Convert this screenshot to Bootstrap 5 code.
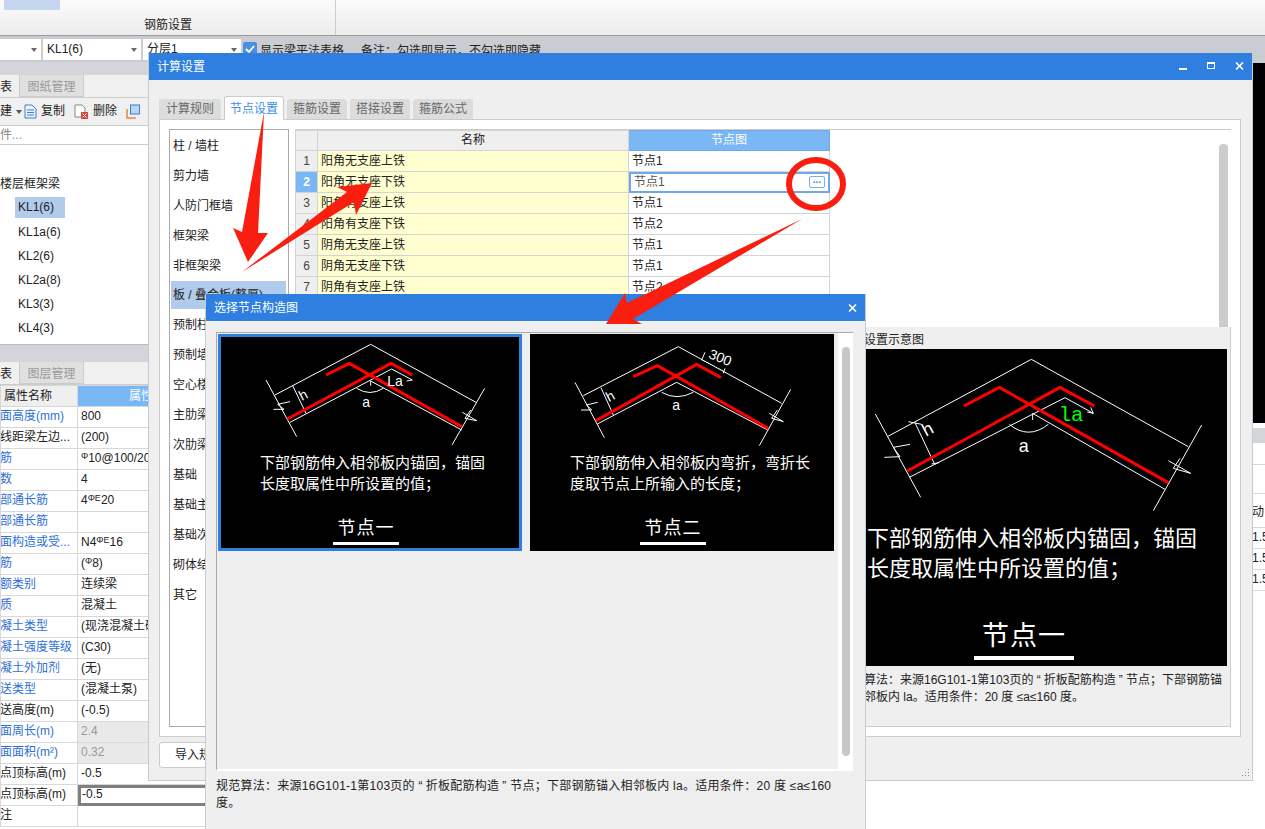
<!DOCTYPE html>
<html lang="zh-CN">
<head>
    <meta charset="UTF-8">
    <meta name="viewport" content="width=device-width, initial-scale=1.0">
    <title>计算设置</title>
    <link href="https://cdn.jsdelivr.net/npm/bootstrap@5.3.0/dist/css/bootstrap.min.css" rel="stylesheet">
    <style>
        body {
            width: 1265px;
            height: 829px;
            overflow: hidden;
            position: relative;
            background: #fff;
            color: #222;
            font: 12px/1.3 "Liberation Sans", "Noto Sans CJK SC", sans-serif;
        }
        /* ribbon + combo bar */
        .ribbon { height: 36px; background: linear-gradient(#fbfbfb, #ececec); border-bottom: 1px solid #9a9a9a; }
        .ribbon-group { width: 336px; height: 35px; border-right: 1px solid #ccc; position: relative; }
        .ribbon-pick { width: 56px; height: 10px; margin-left: 4px; background: #c5d7ef; }
        .ribbon-name { width: 336px; margin-top: 7px; padding-left: 0; text-align: center; line-height: 16px; }
        .combo-bar { height: 26px; background: #c9ccd1; padding-top: 3px; gap: 2px; }
        .combo { height: 21px; background: #fff; padding: 0 4px; line-height: 21px; }
        .combo::after { content: ""; border: 3px solid transparent; border-top: 4px solid #666; border-bottom: 0; margin-left: auto; }
        .combo-a { width: 41px; }
        .combo-b { width: 98px; }
        .tick { width: 14px; height: 14px; margin: 3px 1px 0 0; background: #4a90e2; border-radius: 2px; }
        .bar-text { padding-top: 2px; line-height: 20px; }
        .bar-note { margin-left: 15px; }

        /* left panels */
        .side { width: 216px; height: 767px; }
        .strip { background: #d4d5da; }
        .strip-top { height: 13px; }
        .strip-mid { height: 17px; }
        .side-tabs { height: 23px; background: #f0f0f0; border-bottom: 1px solid #ccc; }
        .side-tab { height: 22px; line-height: 24px; text-align: center; }
        .side-tab-on { width: 19px; background: #f0f0f0; text-align: left; }
        .side-tab-off { width: 65px; background: #e0e0e0; color: #999; border: 1px solid #ccc; border-top: 0; }
        .side-tools { height: 28px; background: #f0f0f0; border-bottom: 1px solid #ccc; gap: 4px; }
        .side-tools svg { flex: none; }
        .tool-caret { border: 3px solid transparent; border-top: 4px solid #555; border-bottom: 0; }
        .tool-copy { margin-left: -2px; }
        .tool-gap { margin-left: 5px; }
        .side-search { height: 19px; line-height: 19px; color: #888; border-bottom: 1px solid #ccc; }
        .tree { height: 200px; padding-top: 27px; border-bottom: 1px solid #bbb; }
        .tree-root { line-height: 24px; }
        .tree-leaf { height: 24px; line-height: 24px; padding-left: 3px; margin-left: 15px; width: 50px; }
        .tree-leaf-on { background: #b0cbeb; height: 21px; line-height: 21px; margin-top: 1px; margin-bottom: 2px; }
        .prop-table { width: 216px; table-layout: fixed; margin: 0; --bs-table-bg: #fff; --bs-table-border-color: #d4d4d4; color: #222; }
        .prop-table th, .prop-table td { height: 21px; padding: 0 0 0 3px; line-height: 19px; font-weight: 400; white-space: nowrap; overflow: hidden; font-size: 12px; border: 1px solid #d8d8d8; }
        .prop-table th { background: #efefef; }
        .prop-table th.col-on { background: #7ab8f5; color: #fff; text-align: center; padding: 0; }
        .prop-key { padding-left: 0 !important; text-indent: -13px; color: #2f6fd6 !important; }
        .prop-plain { color: #222 !important; }
        .prop-off { background: #e9e9e9 !important; color: #999 !important; }
        .prop-pick { outline: 3px solid #7f7f7f; outline-offset: -3px; padding-left: 4px !important; }
        .steel { font-size: 9px; line-height: 0; vertical-align: 3px; }

        /* stuff right of the left panels */
        .canvas-black { height: 361px; background: #000; border-top: 1px solid #c9ccd1; }
        .canvas-strip { height: 15px; margin-top: 5px; background: #d4d5da; }
        .canvas-row { border-bottom: 1px solid #d8d8d8; padding-left: 1035px; white-space: nowrap; overflow: hidden; line-height: 19px; }
        .row-22 { height: 22px; }
        .row-29 { height: 29px; }
        .row-34 { height: 34px; line-height: 36px; }
        .row-21 { height: 21px; }
        .canvas-rows { border-left: 1px solid #ccc; }

        /* windows */
        .win { position: absolute; background: #efefef; z-index: 5; }
        .win-title { height: 27px; background: #2e7fe0; color: #fff; line-height: 28px; padding-left: 8px; }
        .win-calc { left: 148px; top: 53px; width: 1105px; height: 728px; border: 1px solid #c4ccd6; border-top: 0; }
        .win-pick { left: 205px; top: 294px; width: 661px; height: 535px; border-left: 1px solid #c4ccd6; border-right: 1px solid #c4ccd6; z-index: 6; }
        .win-btn { position: absolute; top: 0; }
        .btn-min { left: 1030px; top: 9px; }
        .btn-max { left: 1058px; top: 9px; }
        .btn-close-calc { left: 1086px; top: 9px; }
        .btn-close-pick { left: 642px; top: 10px; }
        .calc-body { padding: 16px 11px 0 10px; }
        .calc-tabs { gap: 3px; height: 23px; border: 0; align-items: flex-end; margin: 0; flex-wrap: nowrap; }
        .calc-tabs .nav-link { width: 60px; height: 20px; padding: 0; margin: 0; line-height: 21px; text-align: center; font-size: 12px; color: #666; background: #dcdcdc; border: 0; border-radius: 3px 3px 0 0; }
        .calc-tabs li:first-child .nav-link { width: 62px; }
        .calc-tabs .nav-link.active { height: 24px; line-height: 25px; margin-bottom: -1px; position: relative; color: #3a8ee6; background: #fff; border: 1px solid #ccc; border-bottom: 0; }
        .calc-panel { height: 618px; background: #fff; border: 1px solid #ccc; padding: 9px; gap: 6px; }
        .node-list { width: 120px; height: 598px; border: 1px solid #aaa; border-radius: 0; padding: 2px 2px 0 1px; display: block; }
        .node-list .list-group-item { border: 0; padding: 0 0 0 2px; height: 28px; margin-bottom: 2px; line-height: 28px; color: #222; background: transparent; font-size: 12px; border-radius: 0; }
        .node-list .list-group-item.active { background: #b0cbeb; }
        .set-area { width: 936px; }
        .set-top { height: 198px; border-top: 1px solid #ccc; position: relative; overflow: hidden; }
        .set-table { width: 534px; table-layout: fixed; margin: 0; color: #222; }
        .set-table th, .set-table td { height: 21px; padding: 1px 3px 0; line-height: 19px; font-weight: 400; font-size: 12px; border: 1px solid #d4d4d4; white-space: nowrap; }
        .set-table th { height: 20px; padding-top: 0; background: #efefef; text-align: center; }
        .set-table th.col-on { background: #7ab8f5; color: #fff; border-color: #6ea8e8; }
        .set-table .num { padding: 1px 0 0; text-align: center; background: #efefef; color: #444; }
        .set-table .num-on { background: #7ab8f5; color: #fff; font-weight: 700; }
        .set-table .yel { background: #fefecf; }
        .set-table .cell-on { color: #555; padding-left: 5px; outline: 2px solid #6ea8e8; outline-offset: -2px; position: relative; }
        .dots-btn { position: absolute; right: 4px; top: 4px; width: 16px; height: 12px; border: 1px solid #7ab0ea; border-radius: 2px; background: #fff; line-height: 6px; text-align: center; color: #4b84c8; font-weight: 700; font-size: 10px; }
        .set-scroll { position: absolute; right: 3px; top: 14px; bottom: 0; width: 9px; background: #ccc; border-radius: 4px 4px 0 0; }
        .set-bottom { height: 400px; background: #efefef; border: 1px solid #ccc; border-top: 0; padding-right: 3px; }
        .demo-col { width: 387px; }
        .demo-head { height: 22px; line-height: 27px; }
        .demo-pic { height: 317px; background: #000; color: #fff; }
        .demo-text { font-size: 22px; line-height: 30px; padding-left: 27px; white-space: nowrap; }
        .demo-cap { width: 100px; margin-left: 134px; margin-top: 34px; text-align: center; font-size: 27px; line-height: 36px; letter-spacing: 1px; white-space: nowrap; }
        .demo-cap::after, .node-cap::after { content: ""; display: block; background: #fff; margin-top: 2px; }
        .demo-cap::after { height: 4px; }
        .demo-desc { margin-top: 6px; line-height: 17px; white-space: nowrap; }
        .quoted { margin: 0 3px; }
        .calc-foot { padding-top: 5px; }
        .import-btn { width: 80px; height: 26px; padding: 0; background: #fff; border: 1px solid #ccc; border-radius: 3px; font-size: 12px; color: #222; }
        .grip { position: absolute; right: 2px; bottom: 2px; }

        .pick-body { padding: 11px 12px 0 10px; }
        .pick-box { height: 439px; border-top: 1px solid #aaa; border-left: 1px solid #aaa; border-bottom: 2px solid #fff; position: relative; padding: 1px 0 0 1px; gap: 8px; }
        .pick-scroll { position: absolute; right: 0; top: 0; bottom: 0; width: 15px; background: #fff; }
        .pick-scroll::after { content: ""; position: absolute; left: 4px; top: 14px; width: 8px; height: 409px; background: #c8c8c8; border-radius: 4px; }
        .node-card { width: 304px; height: 217px; background: #000; color: #fff; }
        .node-card-on { outline: 3px solid #2e7fe0; outline-offset: -3px; }
        .node-text { font-size: 15px; line-height: 21px; white-space: nowrap; }
        .text-a { padding-left: 42px; }
        .text-b { padding-left: 40px; }
        .node-cap { width: 66px; margin-top: 22px; text-align: center; font-size: 18px; line-height: 24px; letter-spacing: 1px; white-space: nowrap; }
        .node-cap::after { height: 3px; }
        .cap-a { margin-left: 115px; }
        .cap-b { margin-left: 110px; }
        .pick-desc { padding-top: 7px; line-height: 17px; white-space: nowrap; letter-spacing: .26px; }

        .mark-layer { position: absolute; left: 0; top: 0; pointer-events: none; z-index: 7; }
        svg { display: block; }
        .dw { fill: none; stroke: #fff; stroke-width: 3; }
        .dr { fill: none; stroke: #f00; stroke-width: 9; stroke-linejoin: round; }
        .dt { fill: #fff; font-family: "Liberation Sans", sans-serif; font-size: 42px; }
        .dt-big { font-size: 54px; }
        .dt-green { fill: #0f0; font-size: 62px; font-family: "Liberation Mono", monospace; }
    </style>
</head>
<body>
    <div class="ribbon d-flex">
        <div class="ribbon-group">
            <div class="ribbon-pick"></div>
            <div class="ribbon-name">钢筋设置</div>
        </div>
    </div>
    <div class="combo-bar d-flex">
        <div class="combo combo-a d-flex align-items-center"></div>
        <div class="combo combo-b d-flex align-items-center">KL1(6)</div>
        <div class="combo combo-b d-flex align-items-center">分层1</div>
        <div class="tick">
            <svg width="14" height="14" viewBox="0 0 14 14"><path d="M3 7l3 3 5-6" fill="none" stroke="#fff" stroke-width="1.800"/></svg>
        </div>
        <div class="bar-text">显示梁平法表格</div>
        <div class="bar-text bar-note">备注：勾选即显示，不勾选即隐藏</div>
    </div>

    <div class="d-flex">
        <div class="side">
            <div class="strip strip-top"></div>
            <div class="side-tabs d-flex">
                <div class="side-tab side-tab-on">表</div>
                <div class="side-tab side-tab-off">图纸管理</div>
            </div>
            <div class="side-tools d-flex align-items-center">
                <span>建</span><span class="tool-caret"></span>
                <svg width="13" height="15" viewBox="0 0 13 15" class="tool-copy"><path d="M1 1h7l4 4v9H1z" fill="#eaf3fd" stroke="#3b7fc9"/><path d="M3 6h7M3 8.500h7M3 11h7" stroke="#3b7fc9"/></svg>
                <span>复制</span>
                <svg width="15" height="15" viewBox="0 0 15 15" class="tool-gap"><path d="M1 1h7l3 3v9H1z" fill="#fff" stroke="#888"/><rect x="7" y="8" width="7" height="7" fill="#d9453a"/><path d="M8.500 9.500l4 4m0-4l-4 4" stroke="#fff"/></svg>
                <span>删除</span>
                <svg width="15" height="15" viewBox="0 0 15 15" class="tool-gap"><path d="M1 5v9h9" fill="none" stroke="#e8873a" stroke-width="1.500"/><rect x="4.500" y="1" width="9" height="9" fill="#b9d7f5" stroke="#3b7fc9"/></svg>
            </div>
            <div class="side-search">件...</div>
            <div class="tree">
                <div class="tree-root">楼层框架梁</div>
                <div class="tree-leaf tree-leaf-on">KL1(6)</div>
                <div class="tree-leaf">KL1a(6)</div>
                <div class="tree-leaf">KL2(6)</div>
                <div class="tree-leaf">KL2a(8)</div>
                <div class="tree-leaf">KL3(3)</div>
                <div class="tree-leaf">KL4(3)</div>
            </div>
            <div class="strip strip-mid"></div>
            <div class="side-tabs d-flex">
                <div class="side-tab side-tab-on">表</div>
                <div class="side-tab side-tab-off">图层管理</div>
            </div>
            <table class="table prop-table">
                <colgroup><col width="77"><col width="139"></colgroup>
                <thead><tr><th>属性名称</th><th class="col-on">属性值</th></tr></thead>
                <tbody>
                    <tr><td class="prop-key">截面高度(mm)</td><td>800</td></tr>
                    <tr><td class="prop-key prop-plain">轴线距梁左边...</td><td>(200)</td></tr>
                    <tr><td class="prop-key">箍筋</td><td><span class="steel">Φ</span>10@100/200(2)</td></tr>
                    <tr><td class="prop-key">肢数</td><td>4</td></tr>
                    <tr><td class="prop-key">上部通长筋</td><td>4<span class="steel">ΦE</span>20</td></tr>
                    <tr><td class="prop-key">下部通长筋</td><td></td></tr>
                    <tr><td class="prop-key">侧面构造或受...</td><td>N4<span class="steel">ΦE</span>16</td></tr>
                    <tr><td class="prop-key">拉筋</td><td>(<span class="steel">Φ</span>8)</td></tr>
                    <tr><td class="prop-key">定额类别</td><td>连续梁</td></tr>
                    <tr><td class="prop-key">材质</td><td>混凝土</td></tr>
                    <tr><td class="prop-key">混凝土类型</td><td>(现浇混凝土碎石)</td></tr>
                    <tr><td class="prop-key">混凝土强度等级</td><td>(C30)</td></tr>
                    <tr><td class="prop-key">混凝土外加剂</td><td>(无)</td></tr>
                    <tr><td class="prop-key">泵送类型</td><td>(混凝土泵)</td></tr>
                    <tr><td class="prop-key prop-plain">泵送高度(m)</td><td>(-0.5)</td></tr>
                    <tr><td class="prop-key">截面周长(m)</td><td class="prop-off">2.4</td></tr>
                    <tr><td class="prop-key">截面面积(m²)</td><td class="prop-off">0.32</td></tr>
                    <tr><td class="prop-key prop-plain">起点顶标高(m)</td><td>-0.5</td></tr>
                    <tr><td class="prop-key prop-plain">终点顶标高(m)</td><td class="prop-pick">-0.5</td></tr>
                    <tr><td class="prop-key prop-plain">备注</td><td></td></tr>
                </tbody>
            </table>
        </div>
        <div class="flex-fill">
            <div class="canvas-black"></div>
            <div class="canvas-strip"></div>
            <div class="canvas-rows">
                <div class="canvas-row row-22"></div>
                <div class="canvas-row row-29"></div>
                <div class="canvas-row row-34">动</div>
                <div class="canvas-row row-21">1.5</div>
                <div class="canvas-row row-21">1.5</div>
                <div class="canvas-row row-21">1.5</div>
            </div>
        </div>
    </div>

    <!-- 计算设置 window -->
    <div class="win win-calc">
        <div class="win-title">计算设置</div>
        <svg class="win-btn btn-min" width="8" height="9" viewBox="0 0 8 9"><rect y="6" width="8" height="2" fill="#fff"/></svg>
        <svg class="win-btn btn-max" width="8" height="8" viewBox="0 0 8 8"><rect x=".5" y=".5" width="7" height="6" fill="none" stroke="#fff"/><rect width="8" height="2" fill="#fff"/></svg>
        <svg class="win-btn btn-close-calc" width="9" height="8" viewBox="0 0 9 8"><path d="M1 .5l7 7m0-7l-7 7" stroke="#fff" stroke-width="1.600"/></svg>
        <div class="calc-body">
            <ul class="nav nav-tabs calc-tabs">
                <li class="nav-item"><a class="nav-link">计算规则</a></li>
                <li class="nav-item"><a class="nav-link active">节点设置</a></li>
                <li class="nav-item"><a class="nav-link">箍筋设置</a></li>
                <li class="nav-item"><a class="nav-link">搭接设置</a></li>
                <li class="nav-item"><a class="nav-link">箍筋公式</a></li>
            </ul>
            <div class="calc-panel d-flex">
                <div class="list-group node-list">
                    <div class="list-group-item">柱 / 墙柱</div>
                    <div class="list-group-item">剪力墙</div>
                    <div class="list-group-item">人防门框墙</div>
                    <div class="list-group-item">框架梁</div>
                    <div class="list-group-item">非框架梁</div>
                    <div class="list-group-item active">板 / 叠合板(整厚)</div>
                    <div class="list-group-item">预制柱</div>
                    <div class="list-group-item">预制墙</div>
                    <div class="list-group-item">空心楼盖</div>
                    <div class="list-group-item">主肋梁</div>
                    <div class="list-group-item">次肋梁</div>
                    <div class="list-group-item">基础</div>
                    <div class="list-group-item">基础主梁</div>
                    <div class="list-group-item">基础次梁</div>
                    <div class="list-group-item">砌体结构</div>
                    <div class="list-group-item">其它</div>
                </div>
                <div class="set-area">
                    <div class="set-top">
                        <table class="table set-table">
                            <colgroup><col width="22"><col width="311"><col width="201"></colgroup>
                            <thead><tr><th class="num"></th><th>名称</th><th class="col-on">节点图</th></tr></thead>
                            <tbody>
                                <tr><td class="num">1</td><td class="yel">阳角无支座上铁</td><td>节点1</td></tr>
                                <tr><td class="num num-on">2</td><td class="yel">阳角无支座下铁</td><td class="cell-on">节点1<span class="dots-btn">...</span></td></tr>
                                <tr><td class="num">3</td><td class="yel">阳角有支座上铁</td><td>节点1</td></tr>
                                <tr><td class="num">4</td><td class="yel">阳角有支座下铁</td><td>节点2</td></tr>
                                <tr><td class="num">5</td><td class="yel">阴角无支座上铁</td><td>节点1</td></tr>
                                <tr><td class="num">6</td><td class="yel">阴角无支座下铁</td><td>节点1</td></tr>
                                <tr><td class="num">7</td><td class="yel">阴角有支座上铁</td><td>节点2</td></tr>
                            </tbody>
                        </table>
                        <div class="set-scroll"></div>
                    </div>
                    <div class="set-bottom d-flex justify-content-end">
                        <div class="demo-col">
                            <div class="demo-head">节点设置示意图</div>
                            <div class="demo-pic">
                                <svg width="387" height="175" viewBox="0 0 387 175">
                                    <g transform="translate(10,-19) scale(.33333)">
                                        <path class="dw" d="M112 320L544 88L1015 350M178 442L645 203L730 250M548 250L945 478M76 252L212 502M1055 285L910 542"/>
                                        <path class="dw" d="M180 343L130 352L150 380L103 382M955 392L1022 430L970 415L990 385M195 278L255 405M478 283Q535 330 595 283M175 275L215 283M245 402L268 398M548 250V270M722 232L730 250L712 246"/>
                                        <path class="dr" d="M172 423L630 172L733 228M342 228L448 172L955 458"/>
                                        <text class="dt dt-big" x="506" y="366">a</text>
                                        <text class="dt dt-green" x="626" y="274">la</text>
                                        <text class="dt dt-big" transform="translate(228,320) rotate(-28)">h</text>
                                    </g>
                                </svg>
                                <div class="demo-text">下部钢筋伸入相邻板内锚固，锚固</div>
                                <div class="demo-text">长度取属性中所设置的值；</div>
                                <div class="demo-cap">节点一</div>
                            </div>
                            <div class="demo-desc">规范算法：来源16G101-1第103页的 “<span class="quoted">折板配筋构造</span>” 节点；下部钢筋锚<br>入相邻板内 la。适用条件：20 度 ≤a≤160 度。</div>
                        </div>
                    </div>
                </div>
            </div>
            <div class="calc-foot"><button class="btn import-btn">导入规则</button></div>
        </div>
        <svg class="grip" width="10" height="10" viewBox="0 0 10 10"><path d="M8 1h1v1H8zM5 4h1v1H5zM8 4h1v1H8zM2 7h1v1H2zM5 7h1v1H5zM8 7h1v1H8z" fill="#888"/></svg>
    </div>

    <!-- 选择节点构造图 window -->
    <div class="win win-pick">
        <div class="win-title">选择节点构造图</div>
        <svg class="win-btn btn-close-pick" width="9" height="8" viewBox="0 0 9 8"><path d="M1 .5l7 7m0-7l-7 7" stroke="#fff" stroke-width="1.600"/></svg>
        <div class="pick-body">
            <div class="pick-box d-flex align-items-start">
                <div class="node-card node-card-on">
                    <svg width="304" height="118" viewBox="0 0 304 118">
                        <g transform="translate(-8,-39) scale(.33333)">
                            <path class="dw" d="M195 300L482 148L798 322M240 382L545 222L607 255M482 258L755 405M168 255L260 425M824 280L726 450"/>
                            <path class="dw" d="M240 320L203 328L222 343L190 343M757 352L800 377L765 370L782 345M248 272L288 355M440 280Q480 305 520 280M482 258V272M607 255L590 258"/>
                            <path class="dr" d="M232 372L543 205L607 240M348 240L418 205L755 395"/>
                            <text class="dt" x="457" y="336">a</text>
                            <text class="dt" x="532" y="274">La</text>
                            <text class="dt" transform="translate(276,318) rotate(-28)">h</text>
                        </g>
                    </svg>
                    <div class="node-text text-a">下部钢筋伸入相邻板内锚固，锚固</div>
                    <div class="node-text text-a">长度取属性中所设置的值；</div>
                    <div class="node-cap cap-a">节点一</div>
                </div>
                <div class="node-card">
                    <svg width="304" height="118" viewBox="0 0 304 118">
                        <g transform="translate(-5,-39) scale(.33333)">
                            <path class="dw" d="M175 302L460 155L770 325M217 387L455 262L728 405M150 262L238 428M797 283L703 452"/>
                            <path class="dw" d="M218 322L185 330L200 345L168 345M733 355L775 380L740 370L757 345M228 278L265 360M410 292Q455 318 505 292M540 172L530 195M600 220L595 235"/>
                            <path class="dw" stroke-dasharray="3 4" d="M530 195L600 230"/>
                            <path class="dr" d="M213 377L515 208L588 248M325 245L397 212L730 400"/>
                            <text class="dt" x="442" y="346">a</text>
                            <text class="dt" transform="translate(252,322) rotate(-28)">h</text>
                            <text class="dt" transform="translate(548,188) rotate(22)">300</text>
                        </g>
                    </svg>
                    <div class="node-text text-b">下部钢筋伸入相邻板内弯折，弯折长</div>
                    <div class="node-text text-b">度取节点上所输入的长度；</div>
                    <div class="node-cap cap-b">节点二</div>
                </div>
                <div class="pick-scroll"></div>
            </div>
            <div class="pick-desc">规范算法：来源16G101-1第103页的 “<span class="quoted">折板配筋构造</span>” 节点；下部钢筋锚入相邻板内 la。适用条件：20 度 ≤a≤160<br>度。</div>
        </div>
    </div>

    <!-- red hand drawn marks on top of the screenshot -->
    <svg class="mark-layer" width="1265" height="829" viewBox="0 0 1265 829">
        <polygon fill="#fa1e10" points="264,112 258,233 268,233 248,262 233,228 242,232"/>
        <polygon fill="#fa1e10" points="242,272 347,192 337,187 372,183 356,215 354,202"/>
        <polygon fill="#fa1e10" points="802,219 633,319 642,324 606,324 625,293 627,303"/>
        <ellipse cx="816" cy="184" rx="27" ry="24" fill="none" stroke="#fa1e10" stroke-width="6"/>
    </svg>

    <script src="https://cdn.jsdelivr.net/npm/bootstrap@5.3.0/dist/js/bootstrap.bundle.min.js"></script>
</body>
</html>
